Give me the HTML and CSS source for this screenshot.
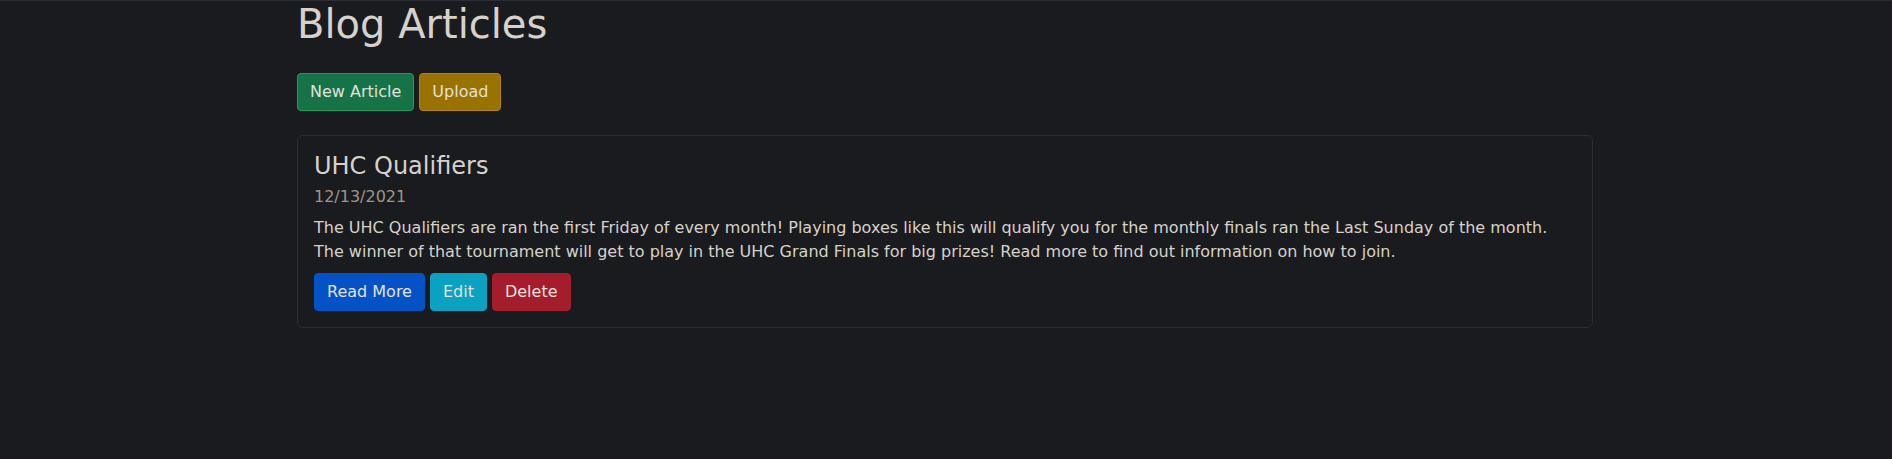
FILE: index.html
```html
<!DOCTYPE html>
<html lang="en">
<head>
<meta charset="utf-8">
<title>Blog Articles</title>
<link rel="stylesheet" href="styles.css">
</head>
<body>
<div class="topline"></div>
<main class="container">
  <h1 class="page-title">Blog Articles</h1>
  <div class="actions">
    <a class="btn btn-success" href="#">New Article</a>
    <a class="btn btn-warning" href="#">Upload</a>
  </div>
  <div class="card">
    <h4 class="card-title">UHC Qualifiers</h4>
    <h6 class="card-subtitle">12/13/2021</h6>
    <p class="card-text">The UHC Qualifiers are ran the first Friday of every month! Playing boxes like this will qualify you for the monthly finals ran the Last Sunday of the month.<br>The winner of that tournament will get to play in the UHC Grand Finals for big prizes! Read more to find out information on how to join.</p>
    <div class="card-actions">
      <a class="btn btn-primary" href="#">Read More</a>
      <a class="btn btn-info" href="#">Edit</a>
      <a class="btn btn-danger" href="#">Delete</a>
    </div>
  </div>
</main>
</body>
</html>
```

FILE: styles.css
```css
html, body {
  margin: 0;
  padding: 0;
}

body {
  background: #1a1b1e;
  color: #d6d2cb;
  font-family: "DejaVu Sans", sans-serif;
  font-size: 16px;
  line-height: 1.5;
  min-height: 459px;
}

.topline {
  position: fixed;
  top: 0;
  left: 0;
  right: 0;
  height: 1px;
  background: #2c2d36;
}

.container {
  width: 1320px;
  box-sizing: border-box;
  margin: 0 auto;
  padding: 0 13px 0 11px;
}

.page-title {
  font-size: 40px;
  font-weight: normal;
  line-height: 1.2;
  margin: 0;
  color: #d6d2cb;
}

.actions {
  display: flex;
  gap: 5px;
  margin-top: 25px;
  margin-bottom: 24px;
}

.btn {
  display: inline-block;
  padding: 6px 12px;
  border: 1px solid transparent;
  border-radius: 4px;
  font-size: 16px;
  line-height: 24px;
  color: #e3e0db;
  text-decoration: none;
}

.btn-success {
  background: #167247;
  border-color: #1e9e60;
}

.btn-warning {
  background: #997200;
  border-color: #b08500;
}

.btn-primary {
  background: #0452c6;
  border-color: #0452c6;
}

.btn-info {
  background: #0aa2c0;
  border-color: #0aa2c0;
}

.btn-danger {
  background: #a51d2d;
  border-color: #a51d2d;
}

.card {
  border: 1px solid #2b2d30;
  border-radius: 6px;
  padding: 16px;
}

.card-title {
  font-size: 24px;
  font-weight: normal;
  line-height: 1.2;
  margin: 0 0 8px;
}

.card-subtitle {
  font-size: 16px;
  font-weight: normal;
  line-height: 1.2;
  margin: -2px 0 10px;
  color: #9d9588;
}

.card-text {
  margin: 0 0 9px;
}

.card-actions {
  display: flex;
  gap: 5px;
}
```
